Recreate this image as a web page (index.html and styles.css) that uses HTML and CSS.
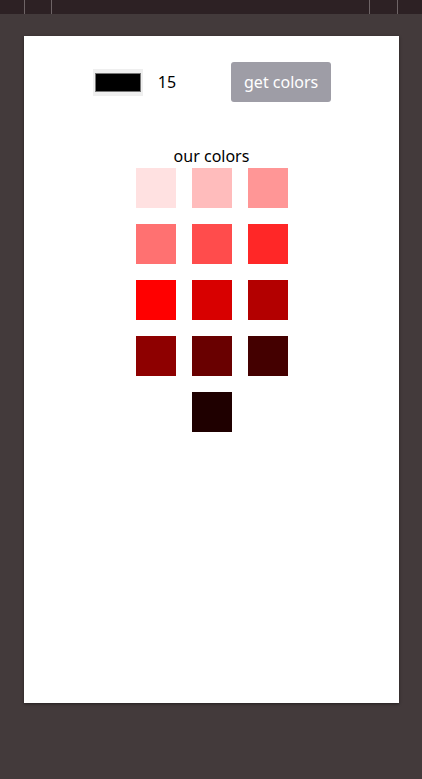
FILE: index.html
```html
<!DOCTYPE html>
<html lang="en">
<head>
<meta charset="utf-8">
<title>our colors</title>
<link rel="stylesheet" href="styles.css">
</head>
<body>
<div class="topbar">
  <span class="sep sep-a"></span>
  <span class="sep sep-b"></span>
  <span class="spacer"></span>
  <span class="sep sep-c"></span>
  <span class="sep sep-d"></span>
</div>
<main class="device">
  <div class="controls">
    <div class="picker"><div class="swatch"></div></div>
    <span class="count">15</span>
    <button class="btn" type="button">get colors</button>
  </div>
  <div class="title">our colors</div>
  <div class="grid">
    <div class="cell" style="background:#ffe1e1"></div>
    <div class="cell" style="background:#ffbcbc"></div>
    <div class="cell" style="background:#ff9696"></div>
    <div class="cell" style="background:#ff7171"></div>
    <div class="cell" style="background:#ff4c4c"></div>
    <div class="cell" style="background:#ff2727"></div>
    <div class="cell" style="background:#ff0000"></div>
    <div class="cell" style="background:#d80000"></div>
    <div class="cell" style="background:#b30000"></div>
    <div class="cell" style="background:#8e0000"></div>
    <div class="cell" style="background:#690000"></div>
    <div class="cell" style="background:#440000"></div>
    <div class="cell" style="background:#1f0000"></div>
  </div>
</main>
</body>
</html>
```
FILE: styles.css
```css
html, body {
  margin: 0;
  padding: 0;
}
body {
  background: #433a3b;
  font-family: "Noto Sans", "Open Sans", sans-serif;
  font-size: 16px;
  color: #000;
  height: 779px;
  overflow: hidden;
}
.topbar {
  height: 14px;
  background: #2d2124;
  display: flex;
}
.sep {
  width: 1px;
  background: #6e6466;
}
.sep-a { margin-left: 24px; }
.sep-b { margin-left: 26px; }
.spacer { flex: 1; }
.sep-c { margin-right: 27px; }
.sep-d { margin-right: 24px; }
.device {
  display: block;
  margin: 22px 0 0 24px;
  width: 375px;
  height: 667px;
  background: #fff;
  box-shadow: 0 1px 3px rgba(0, 0, 0, 0.45);
  box-sizing: border-box;
  padding-top: 26px;
}
.controls {
  display: flex;
  justify-content: center;
  align-items: center;
  height: 40px;
}
.picker {
  width: 50px;
  height: 27px;
  box-sizing: border-box;
  padding: 4px 2px;
  background: #efefef;
  margin-left: 1px;
}
.swatch {
  height: 100%;
  box-sizing: border-box;
  border: 1px solid #777;
  background: #000;
}
.count {
  margin-left: 15px;
  line-height: 22px;
}
.btn {
  margin-left: 55px;
  width: 100px;
  height: 40px;
  border: none;
  border-radius: 3px;
  background: #9e9da6;
  color: #fff;
  font-family: inherit;
  font-size: 16px;
  padding: 0;
}
.title {
  margin-top: 43px;
  text-align: center;
  line-height: 22px;
}
.grid {
  margin: 1px auto 0;
  width: 152px;
  display: flex;
  flex-wrap: wrap;
  justify-content: center;
  gap: 16px;
}
.cell {
  width: 40px;
  height: 40px;
}
```
